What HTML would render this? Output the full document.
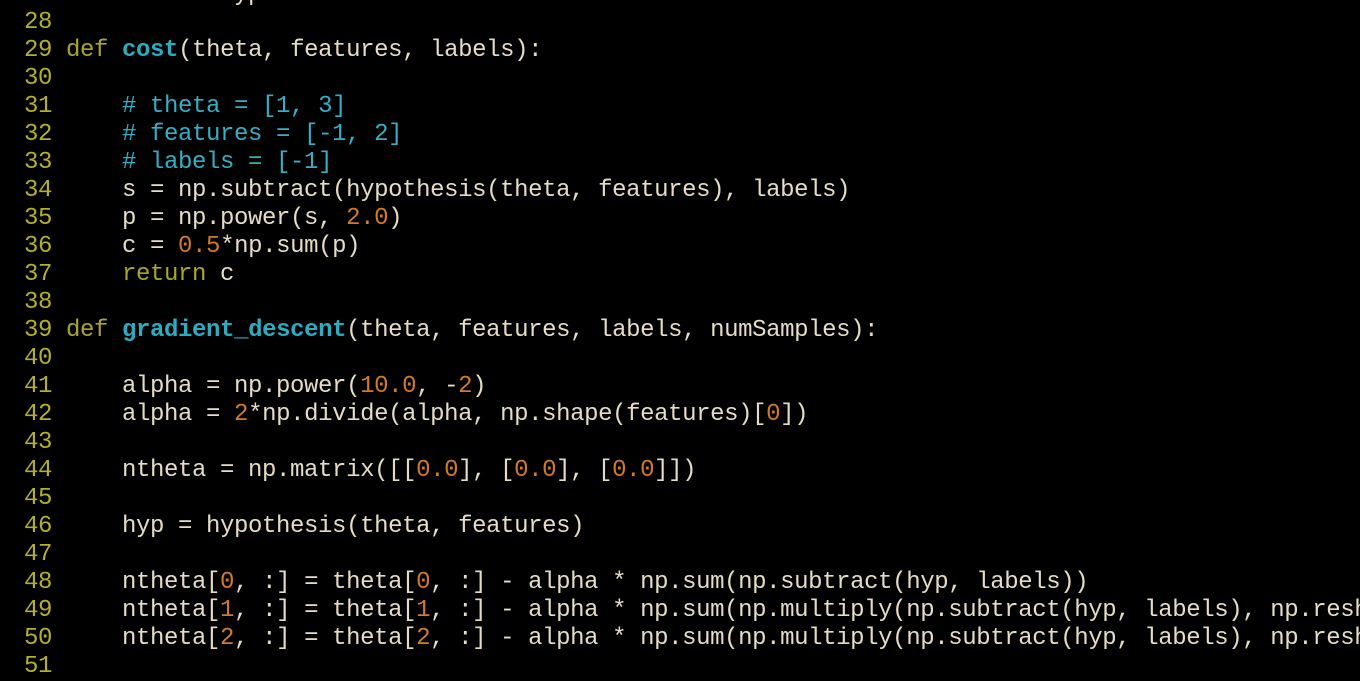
<!DOCTYPE html>
<html><head><meta charset="utf-8"><style>
html,body{margin:0;padding:0;background:#000;width:1360px;height:660px;overflow:hidden}
pre{position:absolute;left:10px;top:-19px;margin:0;font-family:"Liberation Mono",monospace;font-size:24px;letter-spacing:-0.4px;line-height:28px;color:#e6dcc6;white-space:pre}
.n{color:#b3b02f}.k{color:#aaa52e}.f{color:#2fabbf;font-weight:bold}.c{color:#36aec6}.o{color:#d07a2c}
</style></head><body><pre><span class="n"> 27 </span>    <span class="k">return</span> hyp
<span class="n"> 28 </span>
<span class="n"> 29 </span><span class="k">def</span> <span class="f">cost</span>(theta, features, labels):
<span class="n"> 30 </span>
<span class="n"> 31 </span>    <span class="c"># theta = [1, 3]</span>
<span class="n"> 32 </span>    <span class="c"># features = [-1, 2]</span>
<span class="n"> 33 </span>    <span class="c"># labels = [-1]</span>
<span class="n"> 34 </span>    s = np.subtract(hypothesis(theta, features), labels)
<span class="n"> 35 </span>    p = np.power(s, <span class="o">2.0</span>)
<span class="n"> 36 </span>    c = <span class="o">0.5</span>*np.sum(p)
<span class="n"> 37 </span>    <span class="k">return</span> c
<span class="n"> 38 </span>
<span class="n"> 39 </span><span class="k">def</span> <span class="f">gradient_descent</span>(theta, features, labels, numSamples):
<span class="n"> 40 </span>
<span class="n"> 41 </span>    alpha = np.power(<span class="o">10.0</span>, -<span class="o">2</span>)
<span class="n"> 42 </span>    alpha = <span class="o">2</span>*np.divide(alpha, np.shape(features)[<span class="o">0</span>])
<span class="n"> 43 </span>
<span class="n"> 44 </span>    ntheta = np.matrix([[<span class="o">0.0</span>], [<span class="o">0.0</span>], [<span class="o">0.0</span>]])
<span class="n"> 45 </span>
<span class="n"> 46 </span>    hyp = hypothesis(theta, features)
<span class="n"> 47 </span>
<span class="n"> 48 </span>    ntheta[<span class="o">0</span>, :] = theta[<span class="o">0</span>, :] - alpha * np.sum(np.subtract(hyp, labels))
<span class="n"> 49 </span>    ntheta[<span class="o">1</span>, :] = theta[<span class="o">1</span>, :] - alpha * np.sum(np.multiply(np.subtract(hyp, labels), np.reshape
<span class="n"> 50 </span>    ntheta[<span class="o">2</span>, :] = theta[<span class="o">2</span>, :] - alpha * np.sum(np.multiply(np.subtract(hyp, labels), np.reshape
<span class="n"> 51 </span>
</pre></body></html>
